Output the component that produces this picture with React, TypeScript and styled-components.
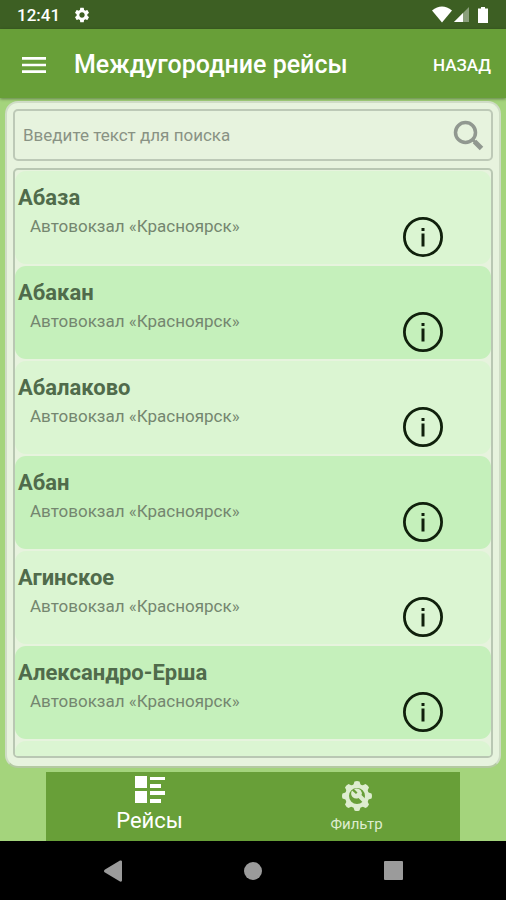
import React, { useState } from 'react';
import styled, { createGlobalStyle } from 'styled-components';
import { MdSettings, MdMenu } from 'react-icons/md';

const GlobalStyle = createGlobalStyle`
  * { box-sizing: border-box; }
  body { margin: 0; background: #a4d47c; font-family: Roboto, "Liberation Sans", sans-serif; }
  button, input { font-family: inherit; }
  button { border: 0; padding: 0; background: none; color: inherit; cursor: pointer; }
`;

const Screen = styled.div`
  display: flex;
  flex-direction: column;
  height: 100vh;
  background: #a4d47c;
`;

const StatusBar = styled.div`
  display: flex;
  align-items: center;
  flex: none;
  height: 29px;
  padding: 0 17px;
  background: #3d5f23;
  color: #fff;
`;

const Clock = styled.time`
  margin-right: 13px;
  font-size: 17px;
  line-height: 28px;
  font-weight: 500;
`;

const StatusIcons = styled.svg`
  margin-left: auto;
`;

const AppBar = styled.header`
  display: flex;
  align-items: center;
  flex: none;
  height: 69px;
  padding: 2px 15px 0 18px;
  background: #689f38;
  color: #fff;
  box-shadow: 0 1px 3px rgba(0, 0, 0, 0.4);
`;

const MenuButton = styled.button`
  display: flex;
  margin-right: 24px;
`;

const Title = styled.h1`
  flex: 1;
  margin: 0;
  font-size: 25px;
  line-height: 32px;
  font-weight: 500;
  white-space: nowrap;
`;

const BackButton = styled.button`
  font-size: 17px;
  line-height: 24px;
  font-weight: 500;
`;

const Panel = styled.main`
  display: flex;
  flex: 1;
  flex-direction: column;
  gap: 7px;
  min-height: 0;
  margin: 3px 5px 4px;
  padding: 6px 6px 8px;
  border: 2px solid #cfdcc6;
  border-bottom-color: #b4c9a2;
  border-radius: 13px;
  background: #e7f3de;
`;

const SearchBox = styled.form`
  display: flex;
  align-items: center;
  flex: none;
  height: 52px;
  padding: 0 7px 0 8px;
  border: 2px solid #bdc9b7;
  border-radius: 5px;
`;

const SearchInput = styled.input`
  flex: 1;
  min-width: 0;
  padding: 0;
  border: 0;
  outline: 0;
  background: none;
  color: #55664f;
  font-size: 17px;
  line-height: 24px;
  &::placeholder { color: #899284; opacity: 1; }
`;

const SearchButton = styled.button`
  display: flex;
  color: #919890;
`;

const List = styled.ul`
  display: flex;
  flex: 1;
  flex-direction: column;
  gap: 2px;
  min-height: 0;
  margin: 0;
  padding: 1px 0 0;
  border: 2px solid #b9c7b3;
  border-radius: 5px;
  list-style: none;
  overflow-y: auto;
  scrollbar-width: none;
`;

const Row = styled.li<{ $shaded: boolean }>`
  display: flex;
  align-items: flex-end;
  justify-content: space-between;
  flex: none;
  height: 93px;
  padding: 0 48px 7px 3px;
  border-radius: 11px;
  background: ${({ $shaded }) => ($shaded ? '#c5f0bb' : '#dbf5d2')};
`;

const ListEnd = styled.li`
  flex: 1;
  border-radius: 11px 11px 0 0;
  background: #dbf5d2;
`;

const RowText = styled.div`
  align-self: flex-start;
  padding-top: 13px;
`;

const City = styled.h2`
  margin: 0;
  color: #506b4b;
  font-size: 22px;
  line-height: 28px;
  font-weight: 700;
`;

const Station = styled.p`
  margin: 2px 0 0 12px;
  color: #74866f;
  font-size: 17px;
  line-height: 24px;
`;

const InfoButton = styled.button`
  display: flex;
  color: #10200c;
`;

const Tabs = styled.nav`
  display: flex;
  flex: none;
  height: 69px;
  margin: 0 46px;
  background: #689f38;
`;

const Tab = styled.button<{ $active: boolean }>`
  display: flex;
  flex: 1;
  flex-direction: column;
  align-items: center;
  justify-content: flex-end;
  gap: ${({ $active }) => ($active ? '4px' : '2px')};
  padding-bottom: 6px;
  color: ${({ $active }) => ($active ? '#fff' : '#deedd0')};
  font-size: ${({ $active }) => ($active ? '22px' : '15px')};
  line-height: ${({ $active }) => ($active ? '28px' : '22px')};
`;

const SystemBar = styled.nav`
  display: flex;
  align-items: center;
  justify-content: center;
  gap: 100px;
  flex: none;
  height: 59px;
  background: #000;
  color: #9b9b9b;
`;

const SystemButton = styled.button`
  display: flex;
  width: 40px;
  justify-content: center;
`;

const cities = ['Абаза', 'Абакан', 'Абалаково', 'Абан', 'Агинское', 'Александро-Ерша'];

const SearchIcon = () => (
  <svg width="32" height="32" viewBox="0 0 32 32" fill="none" stroke="currentColor" aria-hidden="true">
    <circle cx="13.5" cy="13.5" r="10" strokeWidth="3.5" />
    <path d="M20.5 20.5l3 3" strokeWidth="3" />
    <path d="M22.5 22.5l7 7" strokeWidth="5" />
  </svg>
);

const InfoIcon = () => (
  <svg width="40" height="40" viewBox="0 0 40 40" aria-hidden="true">
    <circle cx="20" cy="20" r="18.600" fill="none" stroke="currentColor" strokeWidth="2.800" />
    <path fill="currentColor" d="M18.500 11h3v3h-3zM18.500 16.500h3v13h-3z" />
  </svg>
);

const TripsIcon = () => (
  <svg width="30" height="27" viewBox="0 0 30 27" fill="currentColor" aria-hidden="true">
    <path d="M0 0h12v12H0zM0 15h12v12H0zM15 1h15v3H15zM15 8h11v4H15zM15 15h15v4H15zM15 23h11v4H15z" />
  </svg>
);

const teeth = [0, 45, 90, 135, 180, 225, 270, 315];

const FilterIcon = () => (
  <svg width="30" height="30" viewBox="0 0 30 30" fill="currentColor" aria-hidden="true">
    <circle cx="15" cy="15" r="10" fill="none" stroke="currentColor" strokeWidth="4" />
    {teeth.map((angle) => (
      <path key={angle} transform={`rotate(${angle} 15 15)`} d="M11 5l1.5-4.5Q15-.5 17.5.5L19 5z" />
    ))}
    <path d="M10 9.5l4 3.5 1.5-1.5L12 8q4-1.500 6.500 1 2 2.500 1 5l6 6-3 3-6-6q-3 1.500-6-1-2.500-3-.500-6.500z" />
  </svg>
);

export default function App() {
  const [query, setQuery] = useState('');
  const [tab, setTab] = useState('trips');
  const shown = cities.filter((city) => city.toLowerCase().includes(query.toLowerCase()));

  return (
    <Screen>
      <GlobalStyle />
      <StatusBar>
        <Clock>12:41</Clock>
        <MdSettings size={18} />
        <StatusIcons width="57" height="18" viewBox="0 0 57 18" fill="currentColor" aria-hidden="true">
          <path d="M0 4.500Q10-3.500 20 4.500L10 16.500z" />
          <path d="M22 16L37 1v15z" opacity=".4" />
          <path d="M22 16l9-9v9z" />
          <path d="M46 2.500h3V1h4v1.500h3V17H46z" />
        </StatusIcons>
      </StatusBar>
      <AppBar>
        <MenuButton type="button" aria-label="Меню">
          <MdMenu size={32} />
        </MenuButton>
        <Title>Междугородние рейсы</Title>
        <BackButton type="button">НАЗАД</BackButton>
      </AppBar>
      <Panel>
        <SearchBox role="search" onSubmit={(event) => event.preventDefault()}>
          <SearchInput
            aria-label="Поиск"
            placeholder="Введите текст для поиска"
            value={query}
            onChange={(event) => setQuery(event.target.value)}
          />
          <SearchButton type="submit" aria-label="Найти">
            <SearchIcon />
          </SearchButton>
        </SearchBox>
        <List>
          {shown.map((city, index) => (
            <Row key={city} $shaded={index % 2 === 1}>
              <RowText>
                <City>{city}</City>
                <Station>Автовокзал «Красноярск»</Station>
              </RowText>
              <InfoButton type="button" aria-label={`Информация: ${city}`}>
                <InfoIcon />
              </InfoButton>
            </Row>
          ))}
          <ListEnd aria-hidden="true" />
        </List>
      </Panel>
      <Tabs>
        <Tab type="button" $active={tab === 'trips'} onClick={() => setTab('trips')}>
          <TripsIcon />
          Рейсы
        </Tab>
        <Tab type="button" $active={tab === 'filter'} onClick={() => setTab('filter')}>
          <FilterIcon />
          Фильтр
        </Tab>
      </Tabs>
      <SystemBar>
        <SystemButton type="button" aria-label="Назад">
          <svg width="18" height="22" viewBox="0 0 18 22" fill="currentColor" aria-hidden="true">
            <path d="M0 11q0-1 1-1.500L16 .5q2-.5 2 1v19q0 1.500-2 1L1 12.500Q0 12 0 11z" />
          </svg>
        </SystemButton>
        <SystemButton type="button" aria-label="Домой">
          <svg width="18" height="18" viewBox="0 0 18 18" fill="currentColor" aria-hidden="true">
            <circle cx="9" cy="9" r="9" />
          </svg>
        </SystemButton>
        <SystemButton type="button" aria-label="Недавние приложения">
          <svg width="19" height="19" viewBox="0 0 19 19" fill="currentColor" aria-hidden="true">
            <rect width="19" height="19" rx="1" />
          </svg>
        </SystemButton>
      </SystemBar>
    </Screen>
  );
}
